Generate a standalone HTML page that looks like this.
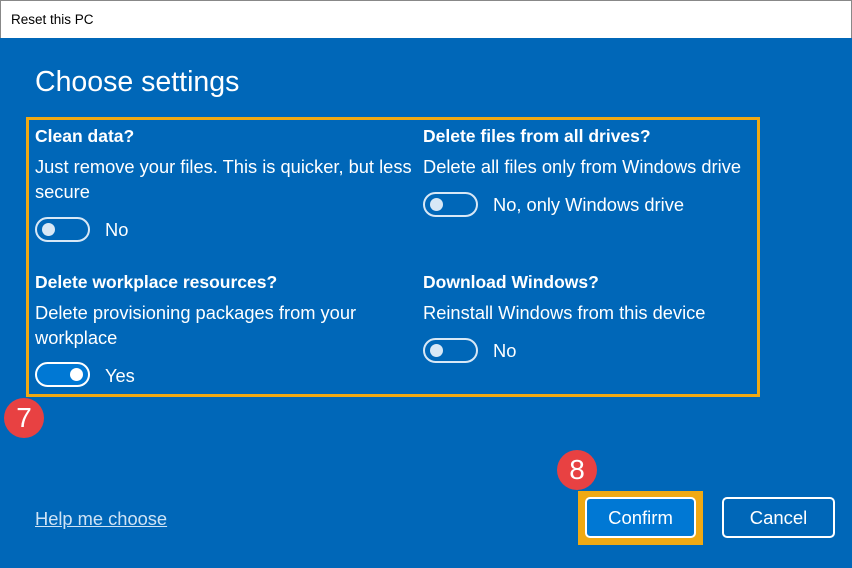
<!DOCTYPE html><html><head><style>
*{margin:0;padding:0;box-sizing:border-box}
body{width:852px;height:568px;overflow:hidden;background:#0067b8;font-family:"Liberation Sans",sans-serif;color:#fff;position:relative}
.a{position:absolute;white-space:nowrap}
.tb{left:0;top:0;width:852px;height:38px;background:#fff;color:#000;font-size:13.5px;padding:11px 10px;border:1px solid #888;border-bottom:none}
.h{font-size:17.5px;font-weight:bold}
.t{font-size:18.3px}
.tg{position:absolute;width:55px;height:25px;border:2px solid #d8e8f6;border-radius:13px}
.tg i{position:absolute;top:4px;left:5px;width:13px;height:13px;border-radius:50%;background:#d8e8f6}
.on{background:#0078d4;border-color:#fff}.on i{left:auto;right:5px;background:#fff}
.bd{position:absolute;width:40px;height:40px;border-radius:50%;background:#e84142;font-size:28px;text-align:center;line-height:40px}
.btn{position:absolute;height:41px;border:2px solid #fff;border-radius:5px;font-size:18.5px;text-align:center;line-height:37px}
</style></head><body>
<div class="a tb">Reset this PC</div>
<div class="a" style="left:35px;top:66px;font-size:28.5px">Choose settings</div>
<div class="a" style="left:26px;top:117px;width:734px;height:280px;border:3px solid #f0a913"></div>
<div class="a h" style="left:35px;top:126px">Clean data?</div>
<div class="a t" style="left:35px;top:156px">Just remove your files. This is quicker, but less</div>
<div class="a t" style="left:35px;top:181px">secure</div>
<div class="tg" style="left:35px;top:217px"><i></i></div>
<div class="a t" style="left:105px;top:219px">No</div>
<div class="a h" style="left:423px;top:126px">Delete files from all drives?</div>
<div class="a t" style="left:423px;top:156px">Delete all files only from Windows drive</div>
<div class="tg" style="left:423px;top:192px"><i></i></div>
<div class="a t" style="left:493px;top:194px">No, only Windows drive</div>
<div class="a h" style="left:35px;top:272px">Delete workplace resources?</div>
<div class="a t" style="left:35px;top:302px">Delete provisioning packages from your</div>
<div class="a t" style="left:35px;top:327px">workplace</div>
<div class="tg on" style="left:35px;top:362px"><i></i></div>
<div class="a t" style="left:105px;top:365px">Yes</div>
<div class="a h" style="left:423px;top:272px">Download Windows?</div>
<div class="a t" style="left:423px;top:302px">Reinstall Windows from this device</div>
<div class="tg" style="left:423px;top:338px"><i></i></div>
<div class="a t" style="left:493px;top:340px">No</div>
<div class="bd" style="left:4px;top:398px">7</div>
<div class="bd" style="left:557px;top:450px">8</div>
<div class="a t" style="left:35px;top:508px;text-decoration:underline;color:#cfe3f5">Help me choose</div>
<div class="a" style="left:578px;top:491px;width:125px;height:54px;background:#f0a913"></div>
<div class="btn" style="left:585px;top:497px;width:111px;background:#0078d4">Confirm</div>
<div class="btn" style="left:722px;top:497px;width:113px">Cancel</div>
</body></html>
